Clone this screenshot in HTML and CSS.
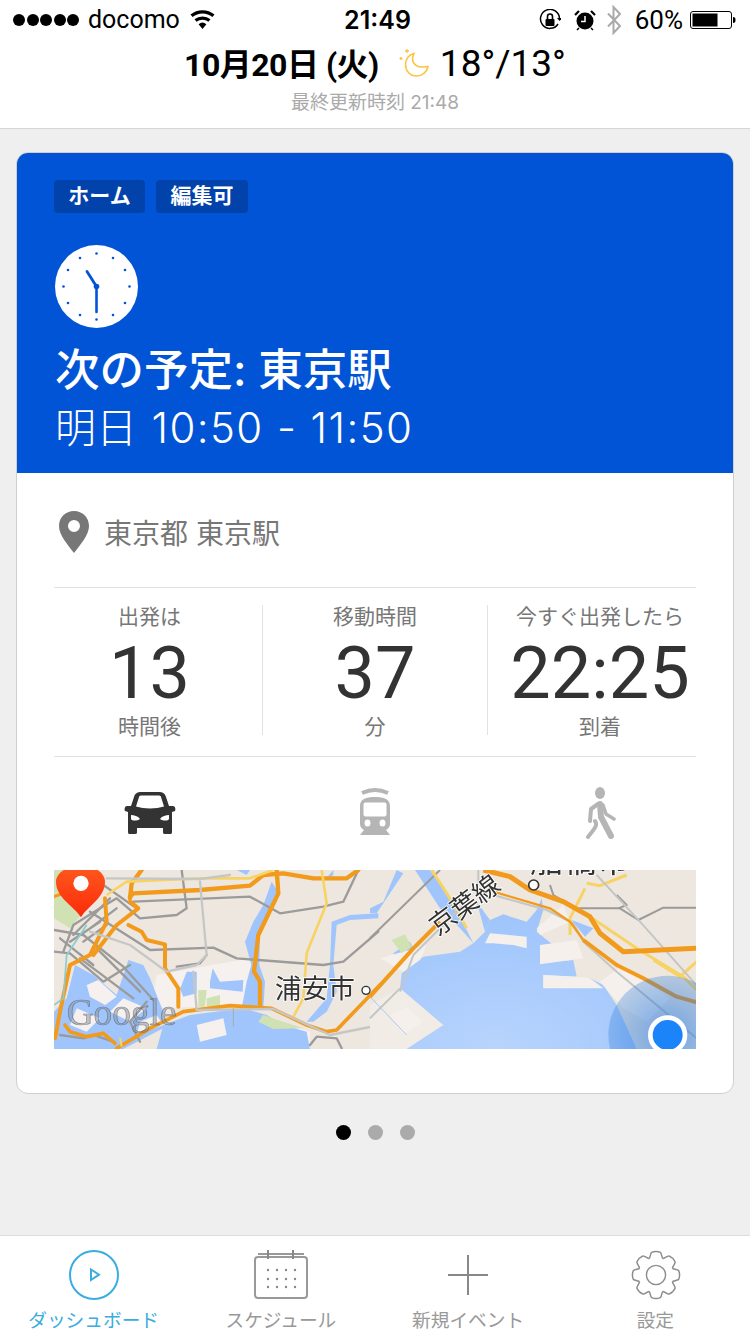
FILE: index.html
```html
<!DOCTYPE html>
<html lang="ja">
<head>
<meta charset="utf-8">
<title>Dashboard</title>
<link rel="stylesheet" href="styles.css">
</head>
<body>
<div class="page">
  <header class="top">
    <div class="status">
      <div class="status-left">
        <span class="signal"><i></i><i></i><i></i><i></i><i></i></span>
        <span class="carrier">docomo</span>
        <svg class="wifi" width="25" height="20" viewBox="0 0 25 20"><path d="M12.5 19 8.6 14.2a6.2 6.2 0 0 1 7.8 0zM6.6 11.8 4.5 9.3a12.6 12.6 0 0 1 16 0l-2.100 2.500a9.300 9.300 0 0 0-11.800 0zM2.600 7 .5 4.500a18.800 18.800 0 0 1 24 0L22.400 7a15.600 15.600 0 0 0-19.800 0z" fill="#000"/></svg>
      </div>
      <div class="clock-time">21:49</div>
      <div class="status-right">
        <svg width="22" height="22" viewBox="0 0 22 22"><path d="M19 15A9.500 9.500 0 1 1 20.500 10" fill="none" stroke="#000" stroke-width="1.500"/><path d="M18 9h5l-2.500 3z"/><rect x="6.500" y="10" width="9" height="7" rx="1"/><path d="M8.500 10V7.500a2.500 2.500 0 0 1 5 0V10" fill="none" stroke="#000" stroke-width="1.600"/></svg>
        <svg class="alarm" width="22" height="22" viewBox="0 0 22 22"><circle cx="11" cy="12" r="8.500"/><path d="M11 7v5.500H7" fill="none" stroke="#fff" stroke-width="1.500"/><path d="M1 6 5 2M21 6l-4-4" stroke="#000" stroke-width="2.200"/><path d="m5 19-2 2M17 19l2 2" stroke="#000" stroke-width="1.500"/></svg>
        <svg class="bt" width="16" height="30" viewBox="0 0 16 30"><path d="M2 8.500 14 21l-6.500 7V2L14 9 2 21.500" fill="none" stroke="#aaa" stroke-width="2"/></svg>
        <span class="batt-text">60%</span>
        <svg class="batt" width="46" height="20" viewBox="0 0 46 20"><rect x=".5" y="1.500" width="41" height="17" rx="2.500" fill="#fff" stroke="#000"/><rect x="2.500" y="3.500" width="25" height="13" fill="#000"/><path d="M43 7c2 0 2.500 1 2.500 3s-.5 3-2.500 3z"/></svg>
      </div>
    </div>
    <div class="today">
      <span class="date">10月20日 (火)</span>
      <svg class="moon" width="32" height="30" viewBox="0 0 32 30"><path d="M15 4.500c-1.500 3-2 5-1 8 1.500 4.500 6 6.500 15 5-1 5.500-6 9.500-11.500 9.500C11 27 6.500 22 6.500 15.500 6.500 10 10 5.500 15 4.500z" fill="none" stroke="#fdc342" stroke-width="1.600"/><path d="M8 0v4M6 2h4M2 8v3M.5 9.500h3" stroke="#fdc342" stroke-width="1.300"/></svg>
      <span class="temp">18°/13°</span>
    </div>
    <div class="updated">最終更新時刻 21:48</div>
  </header>

  <main class="content">
    <section class="card">
      <div class="hero">
        <div class="tags"><span class="tag">ホーム</span><span class="tag">編集可</span></div>
        <svg class="clock" width="83" height="83" viewBox="0 0 83 83">
          <circle cx="41.500" cy="41.500" r="41.500" fill="#fff"/>
          <g fill="#0254d6"><circle cx="41.500" cy="8.500" r="1.300"/><circle cx="41.500" cy="74.500" r="1.300"/><circle cx="8.500" cy="41.500" r="1.300"/><circle cx="74.500" cy="41.500" r="1.300"/><circle cx="25" cy="13" r="1.300"/><circle cx="58" cy="13" r="1.300"/><circle cx="25" cy="70" r="1.300"/><circle cx="58" cy="70" r="1.300"/><circle cx="13" cy="25" r="1.300"/><circle cx="70" cy="25" r="1.300"/><circle cx="13" cy="58" r="1.300"/><circle cx="70" cy="58" r="1.300"/><circle cx="41.500" cy="41.500" r="2.800"/></g>
          <path d="M41.500 41.500 32 26.500" stroke="#0254d6" stroke-width="2.800" stroke-linecap="round"/>
          <path d="M41.500 41.500V67" stroke="#0254d6" stroke-width="2.600" stroke-linecap="round"/>
        </svg>
        <h1 class="title">次の予定: 東京駅</h1>
        <p class="when">明日 <span class="when-time">10:50 - 11:50</span></p>
      </div>
      <div class="body">
        <div class="place">
          <svg width="30" height="42" viewBox="0 0 30 42"><path fill-rule="evenodd" d="M15 0C6.500 0 0 6.500 0 15c0 9 9 19 15 27 6-8 15-18 15-27C30 6.500 23.500 0 15 0zm0 9a6 6 0 1 1 0 12 6 6 0 0 1 0-12z" fill="#777"/></svg>
          <span>東京都 東京駅</span>
        </div>
        <div class="stats-wrap">
          <div class="stats">
            <div class="stat"><div class="stat-label">出発は</div><div class="stat-num">13</div><div class="stat-label">時間後</div></div>
            <div class="stat"><div class="stat-label">移動時間</div><div class="stat-num">37</div><div class="stat-label">分</div></div>
            <div class="stat"><div class="stat-label">今すぐ出発したら</div><div class="stat-num">22:25</div><div class="stat-label">到着</div></div>
          </div>
        </div>
        <div class="modes">
          <svg width="52" height="52" viewBox="0 0 52 52"><g transform="translate(0 4)"><path fill="#333" d="M10 6C11 2 14 1 17 1H35C38 1 41 2 42 6L45 15H49C51 15 52 18 51 20L48 21V41C48 43 47 43 46 43H41C39 43 39 42 39 41V37H13V41C13 42 13 43 11 43H6C5 43 4 43 4 41V21L1 20C0 18 1 15 3 15H7Z"/><path fill="#fff" d="M12 15.500 15 6C15 5 16 4.500 18 4.500H34C36 4.500 37 5 37 6L40 15.500C32 18 20 18 12 15.500Z"/><path fill="#fff" d="M7 24C10 24 14 25 16 28 13 30 8 30 7 28ZM45 24C42 24 38 25 36 28 39 30 44 30 45 28Z"/></g></svg>
          <svg width="32" height="52" viewBox="0 0 32 52"><path d="M3 6Q16 0 29 6" fill="none" stroke="#b5b5b5" stroke-width="4"/><path fill="#b5b5b5" d="M1 19C1 12 7 10 16 10S31 12 31 19V37C31 40 29 42 27 43L31 48H1L5 43C3 42 1 40 1 37Z"/><rect x="4.500" y="15.500" width="23" height="14" rx="2" fill="#fff"/><ellipse cx="8.500" cy="36" rx="3" ry="3.500" fill="#fff"/><ellipse cx="23.500" cy="36" rx="3" ry="3.500" fill="#fff"/></svg>
          <svg width="32" height="52" viewBox="0 0 32 52"><ellipse cx="16" cy="6" rx="5" ry="6" fill="#b5b5b5"/><g fill="none" stroke="#b5b5b5" stroke-linecap="round" stroke-linejoin="round"><path d="M16 17 17 30 27 49" stroke-width="6"/><path d="M14 17 7 22 6 34" stroke-width="4"/><path d="M19 18 22 27 30 32" stroke-width="3.500"/><path d="M11 34C14 38 11 41 4 50" stroke-width="4"/></g></svg>
        </div>
        <div class="map">
          <svg width="642" height="179" viewBox="0 0 642 179">
            <defs>
              <linearGradient id="pin" x1="0" y1="0" x2="0" y2="1"><stop offset="0" stop-color="#ff5a1e"/><stop offset="1" stop-color="#fb2a0a"/></linearGradient>
              <radialGradient id="bay" cx=".4" cy="1" r=".9"><stop offset="0" stop-color="#b8d4fd"/><stop offset="1" stop-color="#9fc5fc"/></radialGradient>
              <radialGradient id="halo"><stop offset=".3" stop-color="#1a74e0" stop-opacity=".5"/><stop offset="1" stop-color="#2a78d8" stop-opacity=".3"/></radialGradient>
            </defs>
            <rect width="642" height="179" fill="#eee7df"/>
            <g transform="translate(-4 -5) scale(.33333)">
              <g fill="#f6f1ef">
                <path d="M320 330 600 280 640 420 300 430Z"/>
                <path d="M640 450 780 500 780 550 600 550Z"/>
              </g>
              <path fill="#d0e2b4" d="M12 15H60L110 130 60 190 12 160Z"/>
              <g fill="#9fc5fc">
                <path d="M665 50 690 90 660 130 630 210 628 300 645 350 640 430H575L590 350 604 300 585 230 610 170 640 120Z"/>
                <path d="M12 440 50 400 75 300 130 330 200 390 235 285 280 300 300 340 340 440 340 490 220 552H12Z"/>
                <path d="M390 372 410 320 440 320 440 385 400 395Z"/>
                <path d="M480 350 488 310 510 350 580 345 578 380 480 370Z"/>
                <path d="M340 480 420 450 580 430 650 450 700 480 770 500 780 552H320Z"/>
                <path d="M845 170 900 150 985 145V160L900 165 860 180 850 300 860 380 830 440 790 470 770 470 830 400 840 300Z"/>
                <path d="M560 15H600L590 30ZM820 50 850 15V30Z"/>
              </g>
              <g fill="#f6f1ef">
                <path d="M110 360 145 345 200 395 165 420 120 395Z"/>
                <path d="M220 400 290 430 240 470 180 440Z"/>
                <path d="M80 430 150 460 110 500 60 480Z"/>
                <path d="M440 480 520 460 530 510 450 530Z"/>
                <path d="M270 470 320 450 340 480 260 510Z"/>
              </g>
              <path fill="#d0e2b4" d="M445 375H470L465 425H445ZM470 400 510 390 510 425 470 425ZM640 450 700 470 760 490 670 492 625 470Z"/>
              <g fill="none" stroke="#9b9b9b" stroke-width="7" stroke-linejoin="round" stroke-linecap="round">
                <path d="M250 110 600 95 690 145 820 125 880 110 925 15"/>
                <path d="M395 15 410 130 380 150 270 160 200 100 150 130 70 180 40 260"/>
                <path d="M120 140 300 255 490 248 560 280 820 300 880 290 985 200"/>
                <path d="M12 195 100 210 220 305 310 405"/>
                <path d="M12 260 60 265 160 350 240 300M90 280 250 400M140 250 270 380"/>
                <path d="M160 60 260 130M120 190 200 130M70 210 180 100M60 230 150 170M100 230 170 180M30 220 130 300"/>
                <path d="M380 305 450 295 470 270"/>
                <path d="M30 510 100 520 130 510 190 530M270 530 240 470 290 410"/>
                <path d="M780 540 800 515 860 520 875 550"/>
              </g>
              <g fill="none" stroke="#f29a1c" stroke-linejoin="round" stroke-linecap="round">
                <path stroke-width="13" d="M240 95 250 85 450 75 600 62 640 30 700 25 790 40 890 40 925 15"/>
                <path stroke-width="13" d="M240 100 245 55 275 15M680 15 685 85 625 210 612 320 630 350 630 420"/>
                <path stroke-width="12" d="M165 100 170 170 120 270 60 300 30 440 15 520"/>
                <path stroke-width="12" d="M235 180 275 200 290 225 345 238 345 310 385 370 385 425"/>
                <path stroke-width="12" d="M240 110 265 130 200 180 130 270"/>
                <path stroke-width="11" d="M200 550 300 490 400 440 540 422 665 430 770 480 830 500 860 495 990 360"/>
                <path stroke-width="11" d="M45 480 60 500 110 515 160 505 195 535"/>
                <path stroke-width="9" d="M12 95 40 85"/>
              </g>
              <g fill="none" stroke="#f7d366" stroke-width="8" stroke-linejoin="round">
                <path d="M815 15 830 115 770 265 760 400 730 455"/>
                <path d="M170 90 230 50 450 40 600 40 670 15"/>
                <path stroke-width="6" d="M210 518 215 545"/>
              </g>
              <g fill="none" stroke="#c5c7c7" stroke-linejoin="round" stroke-linecap="round">
                <path stroke-width="7" d="M170 40 450 42 540 30M450 50 470 270 440 300 350 320 240 240 120 200"/>
                <path stroke-width="7" d="M430 320 440 435 670 432 840 510 990 480"/>
              </g>
              <path d="M550 430V485" stroke="#aaa" stroke-width="3"/>
              <path d="M12 420 40 400 50 270 110 180" fill="none" stroke="#8ccbd0" stroke-width="5"/>
              <text class="m-google" x="50" y="480">Google</text>
              <text class="m-label" x="675" y="400">浦安市</text>
              <circle cx="948" cy="376" r="12" fill="#fff" stroke="#333" stroke-width="4"/>
              <path d="M93 157C75 125 18 100 18 50 18 20 60 0 93 0S165 20 165 50C165 100 110 125 93 157Z" fill="url(#pin)"/>
              <circle cx="93" cy="55" r="23" fill="#fff"/>
            </g>
            <g transform="translate(316 -5) scale(.33333)">
              <g fill="#f2ece7">
                <path d="M0 420 90 370 220 480 110 552H0Z"/>
              </g>
              <g fill="url(#bay)">
                <path d="M95 325 160 275 270 260 310 235 345 200 360 165 400 148 470 170 500 135 515 100 520 135 500 200 550 240 510 250 510 295 610 285 620 335 520 330 520 370 660 340 700 360 740 420 800 552H110L220 480 90 370Z"/>
              </g>
              <g fill="#9fc5fc">
                <path d="M135 15H180L250 115 310 235 270 190 210 130Z"/>
                <path d="M80 15 100 25 70 70 20 145H0V130L40 110Z"/>
                <path d="M605 165 670 190 645 215Z"/>
                <path d="M70 265 120 230 130 250 80 295Z"/>
                <path d="M345 200 360 165 320 110Z"/>
              </g>
              <g fill="#f5f0ec">
                <path d="M345 235 360 205 470 215 470 250 430 240 370 235Z"/>
                <path d="M510 240 620 225 640 280 510 298Z"/>
                <path d="M520 330 620 335 660 340 700 370 520 370Z"/>
                <path d="M690 350 760 300 900 400 830 470 760 430Z"/>
                <path d="M500 190 580 120 600 170 510 210Z"/>
                <path d="M30 280 170 240 150 285 100 320Z"/>
                <path d="M60 450 110 425 160 470 100 510Z"/>
              </g>
              <path d="M65 225 105 208 125 245 95 265Z" fill="#d0e2b4"/>
              <path d="M0 395 110 510" stroke="#8ab4ee" stroke-width="2" fill="none"/>
              <g fill="none" stroke="#9b9b9b" stroke-width="6" stroke-linejoin="round">
                <path d="M210 15 0 220"/>
                <path d="M540 60 550 90 620 130 750 130 805 165 880 128 980 128"/>
                <path d="M740 90 770 120 745 130"/>
              </g>
              <g fill="none" stroke="#f7d366" stroke-width="9" stroke-linejoin="round">
                <path d="M185 15 240 100 290 190"/>
                <path d="M660 155 800 250 940 335 985 380"/>
                <path d="M645 70 600 160 600 210"/>
                <path d="M650 55 690 62 770 30"/>
                <path d="M850 285 930 335 980 290"/>
              </g>
              <g fill="none" stroke="#c3c6c6" stroke-width="6" stroke-linejoin="round">
                <path d="M90 380 130 270 300 100"/>
                <path d="M370 90 530 135 610 175 640 230 740 320 980 520"/>
                <path d="M680 30 810 170 970 350 985 370"/>
                <path d="M0 460 90 370"/>
                <path d="M325 15V60"/>
              </g>
              <g fill="none" stroke="#f29a1c" stroke-linejoin="round">
                <path stroke-width="15" d="M340 15 420 35 480 75 580 110 660 155 690 205 760 260 980 250"/>
                <path stroke-width="12" d="M0 395 130 250 210 170"/>
                <path stroke-width="7" d="M370 80 540 130 600 170 640 225"/>
                <path stroke-width="12" d="M640 225 740 300 820 340 920 395 980 412"/>
              </g>
              <text class="m-label" transform="translate(205 215) rotate(-37)">京葉線</text>
              <text class="m-label m-big" x="480" y="20">船橋市</text>
              <circle cx="491" cy="60" r="15" fill="#fff" stroke="#333" stroke-width="5"/>
              <circle cx="893" cy="510" r="178" fill="url(#halo)"/>
              <circle cx="893" cy="510" r="52" fill="#1a84f8" stroke="#fff" stroke-width="14"/>
            </g>
          </svg>
        </div>
      </div>
    </section>
    <div class="pager"><i class="on"></i><i></i><i></i></div>
  </main>

  <nav class="tabs">
    <div class="tab active">
      <svg width="50" height="50" viewBox="0 0 50 50"><circle cx="25" cy="25" r="24" fill="none" stroke="#3bace2" stroke-width="2"/><path d="M22 19.500V30L30 24.700Z" fill="none" stroke="#3bace2" stroke-width="2"/></svg>
      <span>ダッシュボード</span>
    </div>
    <div class="tab">
      <svg width="56" height="50" viewBox="0 0 56 50"><g fill="none" stroke="#999" stroke-width="2"><rect x="2" y="7" width="52" height="41" rx="3"/><path d="M5 4H51" /><path d="M15 0V9M40 0V9" stroke="#888"/></g><g fill="#888"><circle cx="15" cy="20" r="1.200"/><circle cx="24" cy="20" r="1.200"/><circle cx="33" cy="20" r="1.200"/><circle cx="42" cy="20" r="1.200"/><circle cx="15" cy="29" r="1.200"/><circle cx="24" cy="29" r="1.200"/><circle cx="33" cy="29" r="1.200"/><circle cx="42" cy="29" r="1.200"/><circle cx="15" cy="37" r="1.200"/><circle cx="24" cy="37" r="1.200"/><circle cx="33" cy="37" r="1.200"/><circle cx="42" cy="37" r="1.200"/></g></svg>
      <span>スケジュール</span>
    </div>
    <div class="tab">
      <svg width="50" height="50" viewBox="0 0 50 50"><path d="M5 25H45M25 5V45" stroke="#888" stroke-width="2" fill="none"/></svg>
      <span>新規イベント</span>
    </div>
    <div class="tab">
      <svg class="gear" width="52" height="52" viewBox="-26 -26 52 52"><defs><path id="tooth" d="M-7.080 -17.090C-6 -18 -6 -22 -4.580 -23.560Q0 -25.500 4.580 -23.560C6 -22 6 -18 7.080 -17.090"/></defs><g fill="none" stroke="#8c8c8c" stroke-width="1.500"><use href="#tooth"/><use href="#tooth" transform="rotate(45)"/><use href="#tooth" transform="rotate(90)"/><use href="#tooth" transform="rotate(135)"/><use href="#tooth" transform="rotate(180)"/><use href="#tooth" transform="rotate(225)"/><use href="#tooth" transform="rotate(270)"/><use href="#tooth" transform="rotate(315)"/><circle r="10"/></g></svg>
      <span>設定</span>
    </div>
  </nav>
</div>
</body>
</html>
```

FILE: styles.css
```css
* { box-sizing: border-box; }
html, body { margin: 0; padding: 0; }
body { font-family: Inter, "Noto Sans CJK JP", sans-serif; color: #000; background: #efefef; }
.page { width: 750px; height: 1334px; display: flex; flex-direction: column; overflow: hidden; }

.top { height: 129px; background: #fff; border-bottom: 1px solid #d6d6d6; flex: none; }
.status { height: 40px; display: grid; grid-template-columns: 1fr auto 1fr; align-items: center; padding: 0 14px 0 13px; }
.status-left { display: flex; align-items: center; }
.signal { display: flex; gap: 1.500px; }
.signal i { width: 12px; height: 12px; border-radius: 50%; background: #000; display: block; }
.carrier { font-size: 25px; margin-left: 9px; line-height: 40px; font-family: Roboto, sans-serif; }
.wifi { margin-left: 10px; }
.clock-time { font-size: 25px; font-weight: 600; margin-left: 6px; }
.status-right { display: flex; align-items: center; justify-content: flex-end; }
.alarm { margin-left: 13px; }
.bt { margin-left: 10px; }
.batt-text { font-size: 26px; margin-left: 13px; font-family: Roboto, sans-serif; }
.batt { margin-left: 7px; }

.today { height: 46px; display: flex; align-items: center; justify-content: center; }
.date { font-size: 32px; font-weight: 700; font-family: Roboto, "Noto Sans CJK JP", sans-serif; letter-spacing: -.5px; padding-bottom: 3px; }
.moon { margin: 2px 9px 0 20px; }
.temp { font-size: 37px; font-family: Roboto, sans-serif; font-weight: 400; margin-top: 1px; }
.updated { text-align: center; font-size: 19px; line-height: 24px; margin-top: 5px; color: #aaa; }

.content { flex: 1; padding: 23px 16px 0; }
.card { height: 942px; background: #fff; border: 1px solid #cfcfcf; border-radius: 12px; overflow: hidden; }

.hero { height: 320px; background: #0254d6; padding: 27px 37px 0; color: #fff; }
.tags { display: flex; gap: 11px; }
.tag { width: 91px; height: 33px; line-height: 32px; text-align: center; background: #0242ab; border-radius: 4px; font-size: 21px; font-weight: 700; }
.tag + .tag { width: 92px; }
.clock { display: block; margin-top: 32px; margin-left: 1px; }
.title { margin: 17px 0 0; font-size: 44.500px; line-height: 50px; font-weight: 500; padding-left: 1px; white-space: nowrap; }
.when { margin: 8px 0 0; font-size: 41px; line-height: 50px; font-weight: 300; padding-left: 1px; white-space: nowrap; }
.when-time { font-size: 42px; letter-spacing: 1.400px; margin-left: 3px; }

.body { padding: 0 37px; }
.place { height: 115px; display: flex; align-items: center; border-bottom: 1px solid #e2e2e2; padding: 3px 0 0 5px; gap: 15px; font-size: 28px; color: #777; }
.stats-wrap { height: 169px; padding-top: 17px; border-bottom: 1px solid #e2e2e2; }
.stats { display: grid; grid-template-columns: repeat(3, 225px); margin: 0 -17px; }
.stat { height: 130px; text-align: center; color: #777; }
.stat + .stat { border-left: 1px solid #e2e2e2; }
.stat-label { font-size: 21px; line-height: 24px; height: 24px; white-space: nowrap; }
.stat-num { font-family: Roboto, sans-serif; font-weight: 400; font-size: 72px; line-height: 76px; height: 76px; margin: 7px 0 3px; color: #333; }
.modes { display: grid; grid-template-columns: repeat(3, 225px); margin: 0 -17px; height: 113px; padding-top: 30px; justify-items: center; align-items: start; }
.map { height: 179px; overflow: hidden; }
.map svg { display: block; filter: blur(.45px); }
.m-google { font-family: "Liberation Serif", serif; font-size: 112px; fill: #8a96a5; fill-opacity: .55; stroke: #555; stroke-opacity: .6; stroke-width: 2; }
.m-label { font-family: "Noto Sans CJK JP", sans-serif; font-size: 80px; fill: #333; stroke: #fff; stroke-width: 5; paint-order: stroke; }
.m-big { font-size: 100px; }

.pager { display: flex; justify-content: center; gap: 17px; margin-top: 31px; }
.pager i { width: 15px; height: 15px; border-radius: 50%; background: #aaa; display: block; }
.pager i.on { background: #000; }

.tabs { flex: none; height: 99px; background: #fff; border-top: 1px solid #dcdcdc; display: grid; grid-template-columns: repeat(4, 1fr); padding: 14px 1px 0 0; }
.tab { display: flex; flex-direction: column; align-items: center; color: #999; font-size: 18.700px; }
.tab svg { display: block; height: 50px; }
.tab .gear { margin-left: 2px; }
.tab span { line-height: 24px; margin-top: 9px; white-space: nowrap; }
.tab.active { color: #3bace2; }
```
